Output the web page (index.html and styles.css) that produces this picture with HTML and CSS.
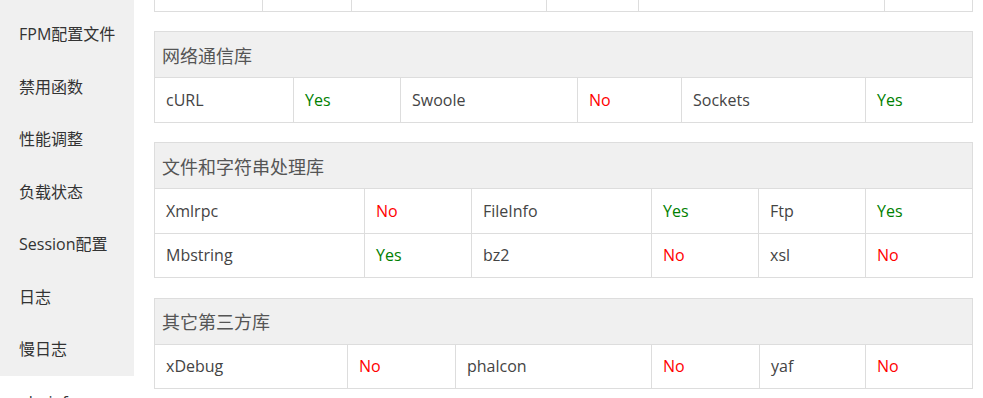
FILE: index.html
```html
<!DOCTYPE html>
<html lang="zh-CN">
<head>
  <meta charset="UTF-8" />
  <meta name="viewport" content="width=device-width, initial-scale=1.0"/>
  <title>PHP设置</title>
  <link rel="stylesheet" href="styles.css">
</head>
<body>
  <div class="layout">
    <ul class="side-menu">
      <li>FPM配置文件</li>
      <li>禁用函数</li>
      <li>性能调整</li>
      <li>负载状态</li>
      <li>Session配置</li>
      <li>日志</li>
      <li>慢日志</li>
      <li class="active">phpinfo</li>
    </ul>

    <div class="main">
      <table class="ext-table t-db">
        <colgroup><col><col><col><col><col><col></colgroup>
        <tbody>
          <tr><td>&nbsp;</td><td></td><td></td><td></td><td></td><td></td></tr>
        </tbody>
      </table>

      <table class="ext-table t-net">
        <colgroup><col><col><col><col><col><col></colgroup>
        <thead>
          <tr><th colspan="6">网络通信库</th></tr>
        </thead>
        <tbody>
          <tr>
            <td>cURL</td><td class="yes">Yes</td>
            <td>Swoole</td><td class="no">No</td>
            <td>Sockets</td><td class="yes">Yes</td>
          </tr>
        </tbody>
      </table>

      <table class="ext-table t-file">
        <colgroup><col><col><col><col><col><col></colgroup>
        <thead>
          <tr><th colspan="6">文件和字符串处理库</th></tr>
        </thead>
        <tbody>
          <tr>
            <td>Xmlrpc</td><td class="no">No</td>
            <td>FileInfo</td><td class="yes">Yes</td>
            <td>Ftp</td><td class="yes">Yes</td>
          </tr>
          <tr>
            <td>Mbstring</td><td class="yes">Yes</td>
            <td>bz2</td><td class="no">No</td>
            <td>xsl</td><td class="no">No</td>
          </tr>
        </tbody>
      </table>

      <table class="ext-table t-other">
        <colgroup><col><col><col><col><col><col></colgroup>
        <thead>
          <tr><th colspan="6">其它第三方库</th></tr>
        </thead>
        <tbody>
          <tr>
            <td>xDebug</td><td class="no">No</td>
            <td>phalcon</td><td class="no">No</td>
            <td>yaf</td><td class="no">No</td>
          </tr>
        </tbody>
      </table>
    </div>
  </div>
</body>
</html>
```

FILE: styles.css
```css
* {
  margin: 0;
  padding: 0;
  box-sizing: border-box;
}

body {
  font-family: "Open Sans", "Noto Sans CJK SC", sans-serif;
  background: #fff;
  color: #333;
}

.layout {
  display: flex;
  align-items: flex-start;
}

/* left menu */
.side-menu {
  list-style: none;
  width: 134px;
  flex-shrink: 0;
  background: #f0f0f0;
  padding-top: 8px;
}

.side-menu li {
  height: 52.5px;
  line-height: 52.5px;
  padding-left: 19px;
  font-size: 16px;
  color: #333;
  white-space: nowrap;
}

.side-menu li.active {
  background: #fff;
}

/* content */
.main {
  flex: 1;
  padding: 0 10px 0 20px;
  margin-top: -34px;
}

.ext-table {
  width: 100%;
  table-layout: fixed;
  border-collapse: collapse;
  margin-bottom: 19.5px;
  font-size: 16px;
  color: #444;
}

.ext-table th,
.ext-table td {
  border: 1px solid #ddd;
  text-align: left;
  white-space: nowrap;
}

.ext-table th {
  background: #f0f0f0;
  font-weight: normal;
  font-size: 18px;
  color: #555;
  height: 46px;
  padding: 0 7px;
}

.ext-table td {
  height: 44.5px;
  padding: 0 11px;
}

.ext-table .yes {
  color: #008000;
}

.ext-table .no {
  color: #ff0000;
}

/* column widths per group */
.t-db col:nth-child(1) { width: 108px; }
.t-db col:nth-child(2) { width: 89px; }
.t-db col:nth-child(3) { width: 195px; }
.t-db col:nth-child(4) { width: 92px; }
.t-db col:nth-child(5) { width: 246px; }

.t-net col:nth-child(1) { width: 139px; }
.t-net col:nth-child(2) { width: 107px; }
.t-net col:nth-child(3) { width: 177px; }
.t-net col:nth-child(4) { width: 104px; }
.t-net col:nth-child(5) { width: 184px; }

.t-file col:nth-child(1) { width: 210px; }
.t-file col:nth-child(2) { width: 107px; }
.t-file col:nth-child(3) { width: 180px; }
.t-file col:nth-child(4) { width: 107px; }
.t-file col:nth-child(5) { width: 107px; }

.t-other col:nth-child(1) { width: 193px; }
.t-other col:nth-child(2) { width: 108px; }
.t-other col:nth-child(3) { width: 196px; }
.t-other col:nth-child(4) { width: 108px; }
.t-other col:nth-child(5) { width: 106px; }
```
